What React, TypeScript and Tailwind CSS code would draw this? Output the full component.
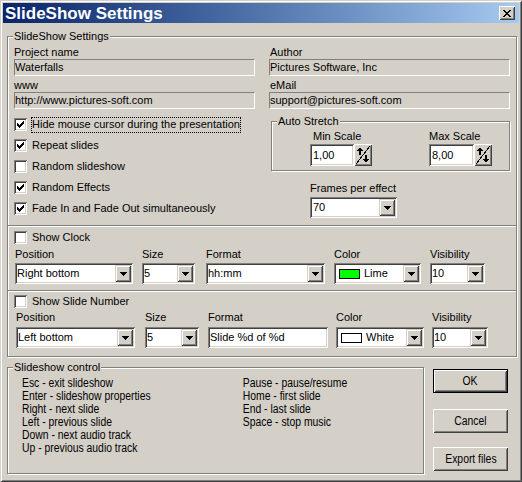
import type { ReactNode } from 'react'

// Win2000-style bevels, built from stacked inset shadows.
const SUNKEN =
  'shadow-[inset_1px_1px_0_#808080,inset_-1px_-1px_0_#ffffff,inset_2px_2px_0_#404040,inset_-2px_-2px_0_#d4d0c8]'
const RAISED =
  'shadow-[inset_1px_1px_0_#ffffff,inset_-1px_-1px_0_#404040,inset_2px_2px_0_#d4d0c8,inset_-2px_-2px_0_#808080]'
const COMBO_BTN =
  'shadow-[inset_1px_1px_0_#d4d0c8,inset_-1px_-1px_0_#404040,inset_2px_2px_0_#ffffff,inset_-2px_-2px_0_#808080]'
// No narrow face is installed, so the condensed text is squeezed horizontally.
const NARROW = "font-['Liberation_Sans',Arial,sans-serif] text-[12.5px] scale-x-[0.83]"

function DownArrow() {
  return (
    <svg width="7" height="4" viewBox="0 0 7 4" shapeRendering="crispEdges">
      <rect x="0" y="0" width="7" height="1" />
      <rect x="1" y="1" width="5" height="1" />
      <rect x="2" y="2" width="3" height="1" />
      <rect x="3" y="3" width="1" height="1" />
    </svg>
  )
}

function CloseX() {
  const rows: [number, number[]][] = [
    [0, [0, 1, 6, 7]],
    [1, [1, 2, 5, 6]],
    [2, [2, 3, 4, 5]],
    [3, [3, 4]],
    [4, [2, 3, 4, 5]],
    [5, [1, 2, 5, 6]],
    [6, [0, 1, 6, 7]],
  ]
  return (
    <svg width="8" height="7" viewBox="0 0 8 7" shapeRendering="crispEdges">
      {rows.flatMap(([y, xs]) => xs.map((x) => <rect key={`${x}-${y}`} x={x} y={y} width="1" height="1" />))}
    </svg>
  )
}

function GroupBox({ label, className, children }: { label: string; className?: string; children?: ReactNode }) {
  return (
    <div className={`relative border border-[#808080] shadow-[inset_1px_1px_0_#ffffff,1px_1px_0_#ffffff] ${className ?? ''}`}>
      <span className="absolute -top-[7px] left-[5px] bg-[#d4d0c8] px-px leading-[13px] whitespace-nowrap">{label}</span>
      {children}
    </div>
  )
}

function Separator({ className }: { className?: string }) {
  return <div className={`border-t border-t-[#808080] border-b border-b-white ${className ?? ''}`} />
}

function Field({ value }: { value: string }) {
  return (
    <div className="h-[17px] flex items-center border-t border-l border-[#808080] border-b border-r border-b-white border-r-white whitespace-nowrap">
      {value}
    </div>
  )
}

function Combo({ w, children }: { w: string; children: ReactNode }) {
  return (
    <div className={`flex h-[21px] bg-white p-[2px] ${SUNKEN} ${w}`}>
      <div className="flex-1 flex items-center overflow-hidden whitespace-nowrap">{children}</div>
      <div className={`w-[16px] h-full bg-[#d4d0c8] flex items-center justify-center ${COMBO_BTN}`}>
        <DownArrow />
      </div>
    </div>
  )
}

function Check({ checked }: { checked?: boolean }) {
  return (
    <div className={`w-[13px] h-[13px] shrink-0 bg-white flex items-center justify-center ${SUNKEN}`}>
      {checked && (
        <svg width="7" height="7" viewBox="0 0 7 7" shapeRendering="crispEdges">
          <polygon points="0,2 2,4 7,-1 7,2 2,7 0,5" />
        </svg>
      )}
    </div>
  )
}

function CheckRow({ label, checked, focused, className }: { label: string; checked?: boolean; focused?: boolean; className?: string }) {
  return (
    <div className={`flex items-center pl-[6px] ${className ?? ''}`}>
      <Check checked={checked} />
      <span
        className={`ml-[4px] h-[16px] flex items-center border whitespace-nowrap ${
          focused ? 'border-dotted border-black' : 'border-transparent'
        }`}
      >
        {label}
      </span>
    </div>
  )
}

function SpinButton() {
  return (
    <div className={`w-[18px] h-[22px] bg-[#d4d0c8] ${RAISED}`}>
      <svg width="18" height="22" viewBox="0 0 18 22" shapeRendering="crispEdges">
        <line x1="2" y1="20" x2="16" y2="2" stroke="#000" />
        <rect x="5" y="5" width="2" height="6" />
        <polygon points="6,3 3,7 9,7" />
        <rect x="11" y="11" width="2" height="6" />
        <polygon points="12,19 9,15 15,15" />
      </svg>
    </div>
  )
}

function ScaleBox({ label, value, w, labelClass }: { label: string; value: string; w: string; labelClass?: string }) {
  return (
    <div className="flex flex-col">
      <div className={`h-[13px] mt-[8px] ${labelClass ?? ''}`}>{label}</div>
      <div className="flex mt-[1px]">
        <div className={`h-[22px] bg-white p-[2px] pl-[3px] flex items-center ${SUNKEN} ${w}`}>{value}</div>
        <SpinButton />
      </div>
    </div>
  )
}

function Labeled({ label, className, gap, children }: { label: string; className?: string; gap: string; children: ReactNode }) {
  return (
    <div className={`flex flex-col ${className ?? ''}`}>
      <div className="h-[13px] whitespace-nowrap">{label}</div>
      <div className={gap}>{children}</div>
    </div>
  )
}

function Swatch({ color }: { color: string }) {
  return <span className={`ml-[3px] w-[21px] h-[10px] border border-black shrink-0 ${color}`} />
}

function Button({ children, isDefault, className }: { children: ReactNode; isDefault?: boolean; className?: string }) {
  return (
    <div
      className={`w-[75px] h-[24px] flex items-center justify-center bg-[#d4d0c8] ${RAISED} ${
        isDefault ? 'border border-black' : ''
      } ${className ?? ''}`}
    >
      <span className={`inline-block whitespace-nowrap ${NARROW}`}>{children}</span>
    </div>
  )
}

export default function App() {
  return (
    <div className="w-[522px] h-[482px] overflow-hidden bg-[#d4d0c8] p-[3px] font-['Liberation_Sans',Arial,sans-serif] text-[11px] leading-[13px] text-black shadow-[inset_1px_1px_0_#d4d0c8,inset_-1px_-1px_0_#404040,inset_2px_2px_0_#ffffff,inset_-2px_-2px_0_#808080]">
      {/* title bar */}
      <div className="h-[20px] flex items-center justify-between pl-[2px] pr-[4px] bg-linear-to-r from-[#0a246a] to-[#a6caf0]">
        <span className="text-[17px] font-bold text-white leading-[20px] pt-[1px]">SlideShow Settings</span>
        <div className={`w-[16px] h-[14px] bg-[#d4d0c8] flex items-center justify-center ${RAISED}`}>
          <CloseX />
        </div>
      </div>

      <div className="px-[4px]">
        <GroupBox label="SlideShow Settings" className="mt-[13px] w-[510px] pb-[8px]">
          <div className="flex gap-[14px] pt-[9px] pl-[6px]">
            <div className="w-[241px]">
              <div className="h-[13px]">Project name</div>
              <Field value="Waterfalls" />
              <div className="h-[13px] mt-[3px]">www</div>
              <Field value="http://www.pictures-soft.com" />
            </div>
            <div className="w-[241px]">
              <div className="h-[13px] pl-px">Author</div>
              <Field value="Pictures Software, Inc" />
              <div className="h-[13px] mt-[3px] pl-px">eMail</div>
              <Field value="support@pictures-soft.com" />
            </div>
          </div>

          <div className="flex">
            <div className="w-[261px] pt-[5px]">
              <CheckRow className="h-[21px]" label="Hide mouse cursor during the presentation" checked focused />
              <CheckRow className="h-[21px]" label="Repeat slides" checked />
              <CheckRow className="h-[21px]" label="Random slideshow" />
              <CheckRow className="h-[21px]" label="Random Effects" checked />
              <CheckRow className="h-[21px]" label="Fade In and Fade Out simultaneously" checked />
            </div>
            <div className="pt-[12px] pl-[2px]">
              <GroupBox label="Auto Stretch" className="w-[239px] pb-[4px]">
                <div className="flex pl-[38px]">
                  <ScaleBox label="Min Scale" value="1,00" w="w-[44px]" labelClass="pl-[3px]" />
                  <div className="ml-[57px]">
                    <ScaleBox label="Max Scale" value="8,00" w="w-[45px]" />
                  </div>
                </div>
              </GroupBox>
              <Labeled label="Frames per effect" className="mt-[11px] ml-[39px]" gap="mt-[2px]">
                <Combo w="w-[87px]">
                  <span className="pl-px">70</span>
                </Combo>
              </Labeled>
            </div>
          </div>

          <Separator className="mt-[6px]" />

          {/* clock */}
          <CheckRow className="h-[21px]" label="Show Clock" />
          <div className="flex pl-[7px]">
            <Labeled label="Position" gap="mt-[2px]">
              <Combo w="w-[118px]">Right bottom</Combo>
            </Labeled>
            <Labeled label="Size" className="ml-[9px]" gap="mt-[2px]">
              <Combo w="w-[53px]">5</Combo>
            </Labeled>
            <Labeled label="Format" className="ml-[11px]" gap="mt-[2px]">
              <Combo w="w-[119px]">hh:mm</Combo>
            </Labeled>
            <Labeled label="Color" className="ml-[9px]" gap="mt-[2px]">
              <Combo w="w-[87px]">
                <Swatch color="bg-[#00ff00]" />
                <span className="ml-[4px]">Lime</span>
              </Combo>
            </Labeled>
            <Labeled label="Visibility" className="ml-[9px]" gap="mt-[2px]">
              <Combo w="w-[55px]">10</Combo>
            </Labeled>
          </div>

          <Separator className="mt-[6px]" />

          {/* slide number */}
          <CheckRow className="h-[19px]" label="Show Slide Number" />
          <div className="flex pl-[8px]">
            <Labeled label="Position" gap="mt-[3px]">
              <Combo w="w-[119px]">Left bottom</Combo>
            </Labeled>
            <Labeled label="Size" className="ml-[10px]" gap="mt-[3px]">
              <Combo w="w-[54px]">5</Combo>
            </Labeled>
            <Labeled label="Format" className="ml-[9px]" gap="mt-[3px]">
              <div className={`w-[120px] h-[21px] bg-white p-[2px] flex items-center whitespace-nowrap ${SUNKEN}`}>
                Slide %d of %d
              </div>
            </Labeled>
            <Labeled label="Color" className="ml-[8px]" gap="mt-[3px]">
              <Combo w="w-[88px]">
                <Swatch color="bg-white" />
                <span className="ml-[4px]">White</span>
              </Combo>
            </Labeled>
            <Labeled label="Visibility" className="ml-[8px]" gap="mt-[3px]">
              <Combo w="w-[56px]">10</Combo>
            </Labeled>
          </div>
        </GroupBox>

        <div className="flex mt-[10px]">
          <GroupBox label="Slideshow control" className="w-[417px] h-[107px]">
            <div className="pt-[9px] pl-[14px]">
              <div className={`flex origin-left leading-[13px] ${NARROW}`}>
                <div className="w-[266px]">
                  <div>Esc - exit slideshow</div>
                  <div>Enter - slideshow properties</div>
                  <div>Right - next slide</div>
                  <div>Left - previous slide</div>
                  <div>Down - next audio track</div>
                  <div>Up - previous audio track</div>
                </div>
                <div className="whitespace-nowrap">
                  <div>Pause - pause/resume</div>
                  <div>Home - first slide</div>
                  <div>End - last slide</div>
                  <div>Space - stop music</div>
                </div>
              </div>
            </div>
          </GroupBox>
          <div className="ml-[9px] pt-[2px] flex flex-col">
            <Button isDefault>OK</Button>
            <Button className="mt-[16px]">Cancel</Button>
            <Button className="mt-[14px]">Export files</Button>
          </div>
        </div>
      </div>
    </div>
  )
}
